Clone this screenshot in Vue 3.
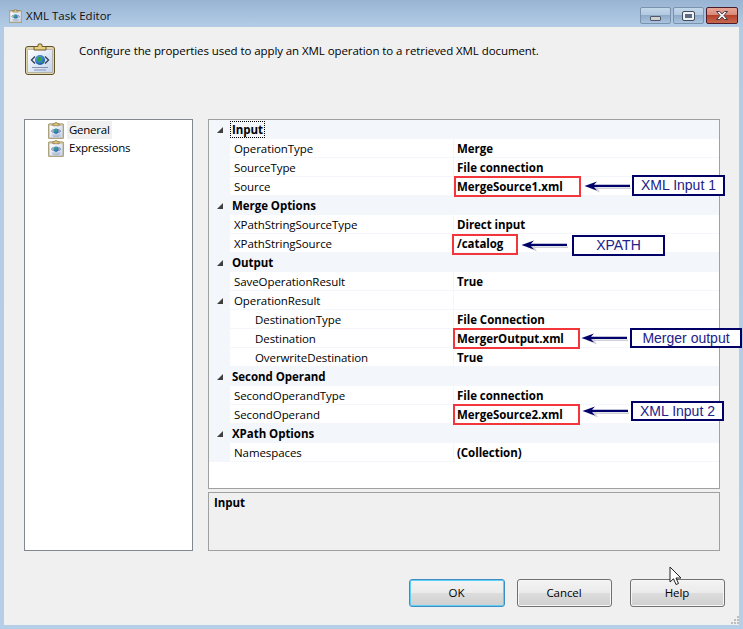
<script setup>
const rows = [
  { t: 'cat', name: 'Input', focus: true },
  { name: 'OperationType', value: 'Merge' },
  { name: 'SourceType', value: 'File connection' },
  { name: 'Source', value: 'MergeSource1.xml' },
  { t: 'cat', name: 'Merge Options' },
  { name: 'XPathStringSourceType', value: 'Direct input' },
  { name: 'XPathStringSource', value: '/catalog' },
  { t: 'cat', name: 'Output' },
  { name: 'SaveOperationResult', value: 'True' },
  { name: 'OperationResult', value: '', toggle: true },
  { name: 'DestinationType', value: 'File Connection', sub: true },
  { name: 'Destination', value: 'MergerOutput.xml', sub: true },
  { name: 'OverwriteDestination', value: 'True', sub: true },
  { t: 'cat', name: 'Second Operand' },
  { name: 'SecondOperandType', value: 'File connection' },
  { name: 'SecondOperand', value: 'MergeSource2.xml' },
  { t: 'cat', name: 'XPath Options' },
  { name: 'Namespaces', value: '(Collection)' }
]

const notes = [
  { label: 'XML Input 1', red: [454, 176, 127, 21], box: [632, 175, 93, 21], arrow: [584, 178] },
  { label: 'XPATH', red: [452, 234, 66, 21], box: [572, 235, 93, 21], arrow: [521, 237] },
  { label: 'Merger output', red: [453, 328, 127, 21], box: [630, 328, 112, 20], arrow: [581, 330] },
  { label: 'XML Input 2', red: [453, 404, 127, 21], box: [631, 401, 93, 20], arrow: [582, 403] }
]

const rect = ([x, y, w, h]) => ({ left: x + 'px', top: y + 'px', width: w + 'px', height: h + 'px' })
const place = ([x, y]) => ({ left: x + 'px', top: y + 'px' })
</script>

<template>
  <div class="window">
    <svg width="0" height="0" class="defs">
      <defs>
        <linearGradient id="paper" x1="0" y1="0" x2="1" y2="1">
          <stop offset="0" stop-color="#ffffff" />
          <stop offset="1" stop-color="#c3d2ec" />
        </linearGradient>
        <radialGradient id="globe" cx="0.4" cy="0.35" r="0.7">
          <stop offset="0" stop-color="#6cb8f2" />
          <stop offset="1" stop-color="#0c4f9e" />
        </radialGradient>
        <symbol id="clip" viewBox="0 0 30 32">
          <rect x="0.5" y="3.5" width="29" height="28" rx="2.5" fill="#e2d6a8" stroke="#5f5128" />
          <rect x="2.5" y="6.5" width="25" height="23" rx="0.5" fill="url(#paper)" stroke="#9a9a9a" stroke-width="0.6" />
          <path d="M9 7V3.500h4V1.500q2-1.400 4 0V3.500h4V7z" fill="#e8cf80" stroke="#6b5a2c" />
          <path d="M10 13.500l-3.500 3.500 3.500 3.500M20 13.500l3.500 3.500-3.500 3.500" fill="none" stroke="#33425a" stroke-width="1.400" />
          <circle cx="15" cy="17" r="5" fill="url(#globe)" />
          <path d="M12.500 14q3-1.500 3.800 1t-1.800 3q-1.500 2-2.500-.8zM16.500 19.500l2-1v2z" fill="#35a042" />
          <path d="M7 24.500h16M9 27h12" stroke="#8393b0" stroke-width="1" />
        </symbol>
      </defs>
    </svg>

    <header class="titlebar">
      <svg class="title-icon"><use href="#clip" /></svg>
      <span class="title-text">XML Task Editor</span>
      <div class="caption">
        <span class="cap-btn">
          <i class="min-glyph"></i>
        </span>
        <span class="cap-btn">
          <i class="max-glyph"></i>
        </span>
        <span class="cap-btn close">
          <svg width="16" height="11" viewBox="0 0 16 11">
            <path d="M2.500 1.500h3L8 3.800 10.500 1.500h3L10 5.500l3.500 4h-3L8 7.200 5.500 9.500h-3L6 5.500z" fill="#eeeeee" stroke="#4a3a4a" stroke-width="1" />
          </svg>
        </span>
      </div>
    </header>

    <div class="client">
      <div class="intro">
        <svg class="intro-icon"><use href="#clip" /></svg>
        <p class="intro-text">Configure the properties used to apply an XML operation to a retrieved XML document.</p>
      </div>

      <div class="main">
        <aside class="tree">
          <div class="tree-item">
            <svg class="tree-icon"><use href="#clip" /></svg>
            <span class="tree-label selected">General</span>
          </div>
          <div class="tree-item">
            <svg class="tree-icon"><use href="#clip" /></svg>
            <span class="tree-label">Expressions</span>
          </div>
        </aside>

        <section class="right">
          <div class="grid">
            <div v-for="row in rows" :key="row.name" class="row" :class="{ cat: row.t === 'cat' }">
              <span class="gutter">
                <svg v-if="row.t === 'cat' || row.toggle" width="6" height="6" viewBox="0 0 6 6">
                  <path d="M6 0V6H0z" fill="#3f3f3f" />
                </svg>
              </span>
              <template v-if="row.t === 'cat'">
                <span class="cat-name" :class="{ focus: row.focus }">{{ row.name }}</span>
              </template>
              <template v-else>
                <span class="name" :class="{ sub: row.sub }">{{ row.name }}</span>
                <span class="value">{{ row.value }}</span>
              </template>
            </div>
          </div>
          <div class="desc">Input</div>
        </section>
      </div>

      <footer class="buttons">
        <button class="btn primary">OK</button>
        <button class="btn cancel">Cancel</button>
        <button class="btn help">Help</button>
      </footer>
    </div>

    <template v-for="n in notes" :key="n.label">
      <div class="red" :style="rect(n.red)"></div>
      <svg class="arrow" :style="place(n.arrow)" width="48" height="18" viewBox="0 0 48 18">
        <path d="M6 10.500L16 6.500 14 9.500H47V11H14L16 14.500z" fill="#8a8a9a" opacity="0.4" />
        <path d="M0.500 8L13 3.500 10 6.800H46V9H10L13 12.500z" fill="#00006a" />
      </svg>
      <div class="note" :style="rect(n.box)">{{ n.label }}</div>
    </template>

    <svg class="cursor" width="14" height="20" viewBox="0 0 14 20">
      <path d="M1 1V16L4.500 12.800 7 18.500 9.500 17.500 7 12H12z" fill="#fff" stroke="#222" stroke-width="1" />
    </svg>
    <svg class="grip" width="12" height="12" viewBox="0 0 12 12">
      <path d="M9 1h2v2H9zM6 4h2v2H6zM9 4h2v2H9zM3 7h2v2H3zM6 7h2v2H6zM9 7h2v2H9z" fill="#bdbdbd" />
    </svg>
  </div>
</template>

<style>
html, body { margin: 0; padding: 0; }
</style>

<style scoped>
.defs { position: absolute; }
.window {
  position: relative;
  width: 743px;
  height: 629px;
  overflow: hidden;
  box-sizing: border-box;
  display: flex;
  flex-direction: column;
  padding: 0 4px 4px;
  background: linear-gradient(180deg, #98b4d3 0, #b3cce6 27px, #b6cfe9 100%);
  font-family: "Open Sans", "Noto Sans", sans-serif;
  font-size: 11.5px;
  letter-spacing: -0.08px;
  color: #000;
}
.titlebar {
  height: 27px;
  flex: none;
  box-sizing: border-box;
  padding-top: 4px;
  display: flex;
  align-items: center;
  position: relative;
}
.title-icon { width: 13px; height: 14px; margin: 0 0 0 5px; }
.title-text { margin-left: 4px; color: #101010; letter-spacing: 0; }
.caption { position: absolute; right: 1px; top: 7px; display: flex; gap: 2px; }
.cap-btn {
  width: 31px;
  height: 17px;
  box-sizing: border-box;
  border: 1px solid #7b92ad;
  border-radius: 2px;
  background: linear-gradient(180deg, #c4d7ea 0, #b2c9e0 45%, #8fabc8 50%, #aac4df 100%);
  display: flex;
  align-items: center;
  justify-content: center;
}
.close {
  width: 32px;
  border-color: #4c1c2c;
  background: linear-gradient(180deg, #e8a698 0, #d98a78 45%, #b5402a 50%, #c86a50 100%);
}
.min-glyph { display: block; width: 9px; height: 3px; margin-top: 5px; background: #d0d0d0; border: 1px solid #4d5a6b; border-radius: 1px; }
.max-glyph { display: block; width: 7px; height: 4px; border: 2px solid #f2f2f2; outline: 1px solid #3f4d60; border-radius: 1px; background: #5a6d88; }

.client {
  flex: 1;
  min-height: 0;
  background: #f0f0f0;
  display: flex;
  flex-direction: column;
}
.intro {
  height: 92px;
  flex: none;
  display: flex;
  box-sizing: border-box;
  padding: 16px 0 0 21px;
}
.intro-icon { width: 30px; height: 32px; }
.intro-text { margin: 0 0 0 24px; line-height: 16px; }

.main { height: 432px; flex: none; display: flex; gap: 15px; padding: 0 19px 0 20px; }
.tree {
  width: 169px;
  box-sizing: border-box;
  border: 1px solid #828790;
  background: #fff;
  padding: 1px 0 0 23px;
}
.tree-item { height: 18px; display: flex; align-items: center; }
.tree-icon { width: 16px; height: 17px; flex: none; }
.tree-label { margin-left: 3px; padding: 0 2px; height: 18px; line-height: 18px; letter-spacing: -0.25px; }
.selected { background: #f0f0f0; }

.right { width: 512px; display: flex; flex-direction: column; gap: 3px; }
.grid {
  height: 370px;
  box-sizing: border-box;
  border: 1px solid #a0a0a0;
  background: #fff;
}
.row {
  height: 19px;
  box-sizing: border-box;
  display: flex;
  background: #f3f6fb;
  line-height: 20px;
}
.gutter { width: 21px; flex: none; display: flex; align-items: center; justify-content: flex-end; padding-right: 7px; box-sizing: border-box; }
.name { width: 223px; flex: none; box-sizing: border-box; background: #fff; margin-bottom: 1px; padding-left: 4px; }
.name.sub { padding-left: 25px; }
.value { flex: 1; margin: 0 0 1px 1px; background: #fff; padding-left: 3px; font-weight: 700; letter-spacing: -0.05px; }
.cat-name { font-weight: 700; padding: 0 2px; letter-spacing: -0.05px; height: 17px; margin-top: 1px; line-height: 18px; }
.focus { outline: 1px dotted #000; outline-offset: -1px; }
.desc {
  height: 59px;
  box-sizing: border-box;
  border: 1px solid #a0a0a0;
  background: #f0f0f0;
  padding: 2px 5px;
  font-weight: 700;
  letter-spacing: -0.05px;
}

.buttons { display: flex; padding: 28px 14px 0 0; justify-content: flex-end; }
.btn {
  width: 95px;
  height: 28px;
  box-sizing: border-box;
  border: 1px solid #707070;
  border-radius: 3px;
  background: linear-gradient(180deg, #f3f3f3 0, #ebebeb 48%, #dddddd 50%, #cfcfcf 100%);
  box-shadow: inset 0 0 0 1px #f6f6f6;
  font: inherit;
  letter-spacing: inherit;
  color: #000;
  padding: 0 1px 2px 0;
}
.primary { width: 96px; border-color: #3c8fc4; box-shadow: inset 0 0 0 1px #5ed0f5; }
.cancel { margin-left: 12px; }
.help { margin-left: 18px; }

.red { position: absolute; box-sizing: border-box; border: 2px solid #f2363c; }
.note {
  position: absolute;
  box-sizing: border-box;
  border: 2px solid #000066;
  background: #fff;
  color: #22228a;
  font-family: "Liberation Sans", sans-serif;
  font-size: 14px;
  letter-spacing: 0;
  line-height: 17px;
  text-align: center;
}
.arrow { position: absolute; }
.cursor { position: absolute; left: 669px; top: 566px; }
.grip { position: absolute; left: 728px; top: 615px; }
</style>
